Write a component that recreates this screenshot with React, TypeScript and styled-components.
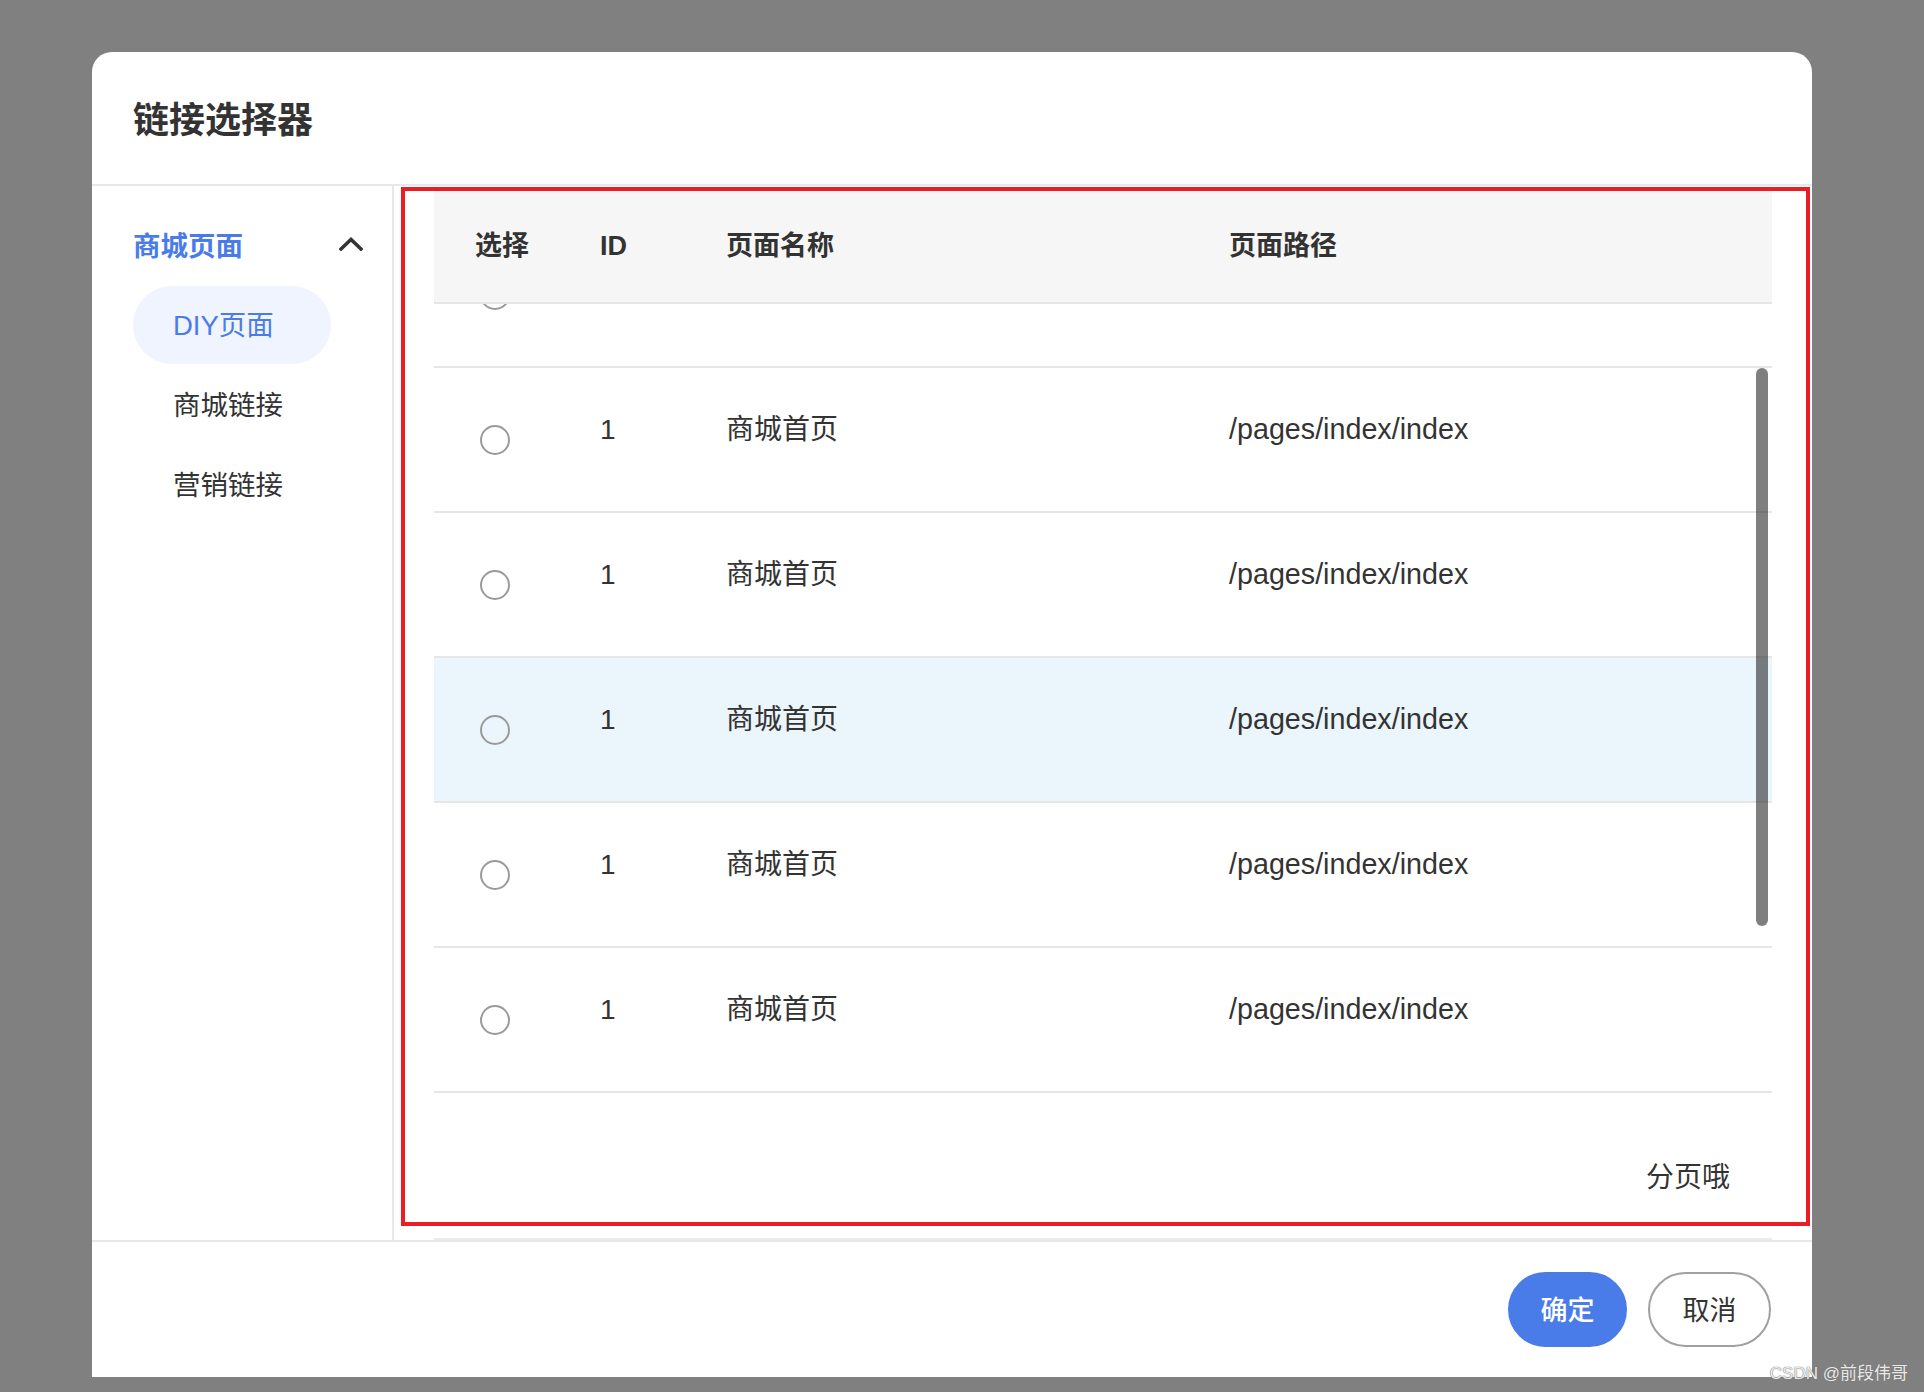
import styled, { createGlobalStyle } from "styled-components";

const GlobalStyle = createGlobalStyle`
  html, body {
    margin: 0;
    padding: 0;
    background: #808080;
  }
  body {
    font-family: "Liberation Sans", "Noto Sans CJK SC", sans-serif;
    color: #333;
  }
  * {
    box-sizing: border-box;
  }
`;

const Page = styled.div`
  position: relative;
  width: 1924px;
  height: 1392px;
  padding: 52px 0 0 92px;
  overflow: hidden;
`;

const Modal = styled.div`
  position: relative;
  width: 1720px;
  height: 1325px;
  background: #fff;
  border-radius: 20px 20px 0 0;
  display: flex;
  flex-direction: column;
`;

const ModalHeader = styled.div`
  height: 134px;
  display: flex;
  align-items: center;
  padding: 0 0 0 41px;
  border-bottom: 2px solid #e8e8e8;
`;

const Title = styled.h2`
  margin: 0;
  font-size: 36px;
  line-height: 1.2;
  font-weight: 700;
  color: #333;
  font-family: "Noto Sans CJK SC", sans-serif;
`;

const ModalBody = styled.div`
  display: flex;
  height: 1054px;
`;

const Sidebar = styled.nav`
  width: 302px;
  flex: none;
  border-right: 2px solid #e8e8e8;
  padding: 28px 29px 0 41px;
  display: flex;
  flex-direction: column;
`;

const GroupHeader = styled.div`
  height: 60px;
  display: flex;
  align-items: center;
  justify-content: space-between;
  margin-bottom: 12px;
`;

const GroupTitle = styled.span`
  font-family: "Noto Sans CJK SC", sans-serif;
  font-size: 27.5px;
  line-height: 1.2;
  font-weight: 700;
  color: #4a7ce9;
`;

const NavItem = styled.div<{ $active?: boolean }>`
  width: 198px;
  height: 78px;
  margin-bottom: 2px;
  border-radius: 39px;
  display: flex;
  align-items: center;
  padding-left: 40px;
  font-size: 27.5px;
  line-height: 1.2;
  color: ${({ $active }) => ($active ? "#4a7ce9" : "#333")};
  background: ${({ $active }) => ($active ? "#f0f4fe" : "transparent")};
`;

const Content = styled.section`
  flex: 1;
  padding: 4px 40px 0;
  display: flex;
  flex-direction: column;
`;

const gridColumns = "125px 126px 503px 1fr";

const HeadRow = styled.div`
  height: 114px;
  display: grid;
  grid-template-columns: ${gridColumns};
  align-items: center;
  padding-left: 41px;
  background: #f6f6f6;
  border-bottom: 2px solid #e6e6e6;
  position: relative;
  z-index: 1;
`;

const HeadCell = styled.div`
  font-size: 27px;
  line-height: 1.2;
  font-weight: 700;
  color: #333;
`;

const Viewport = styled.div`
  position: relative;
  height: 789px;
  overflow: hidden;
`;

// list is scrolled: the first row sits mostly under the sticky header
const RowList = styled.div`
  margin-top: -81px;
`;

const Row = styled.div<{ $hover?: boolean }>`
  height: 145px;
  display: grid;
  grid-template-columns: ${gridColumns};
  align-items: center;
  padding-left: 41px;
  border-bottom: 2px solid #e6e6e6;
  background: ${({ $hover }) => ($hover ? "#ebf5fc" : "#fff")};
`;

const Cell = styled.div<{ $wide?: boolean }>`
  font-size: ${({ $wide }) => ($wide ? "28.7px" : "28px")};
  line-height: 1.2;
  color: #333;
  padding-bottom: 20px;
`;

const Radio = styled.span`
  display: block;
  width: 30px;
  height: 30px;
  margin-left: 5px;
  border: 2px solid #9a9a9a;
  border-radius: 50%;
  background: transparent;
`;

const ScrollThumb = styled.div`
  position: absolute;
  top: 64px;
  right: 4px;
  width: 12px;
  height: 558px;
  border-radius: 6px;
  background: rgba(0, 0, 0, 0.5);
`;

const Pager = styled.div`
  height: 147px;
  padding: 25px 42px 0 0;
  display: flex;
  align-items: center;
  justify-content: flex-end;
  border-bottom: 2px solid #ebebeb;
  font-size: 28px;
  line-height: 1.2;
  color: #333;
`;

const Footer = styled.div`
  flex: 1;
  border-top: 2px solid #e8e8e8;
  display: flex;
  align-items: center;
  justify-content: flex-end;
  gap: 21px;
  padding-right: 41px;
`;

const Button = styled.button<{ $primary?: boolean }>`
  height: 75px;
  width: ${({ $primary }) => ($primary ? "119px" : "123px")};
  border-radius: 38px;
  font-family: "Noto Sans CJK SC", sans-serif;
  font-size: 27px;
  font-weight: ${({ $primary }) => ($primary ? 500 : 400)};
  color: ${({ $primary }) => ($primary ? "#fff" : "#333")};
  background: ${({ $primary }) => ($primary ? "#4a7ce9" : "#fff")};
  border: 2px solid ${({ $primary }) => ($primary ? "#4a7ce9" : "#a0a0a0")};
  padding: 0 0 2px;
  cursor: pointer;
`;

const Annotation = styled.div`
  position: absolute;
  left: 309px;
  top: 135px;
  width: 1409px;
  height: 1039px;
  border: 4px solid #ec1c24;
  pointer-events: none;
  z-index: 2;
`;

const Watermark = styled.div`
  position: absolute;
  right: 16px;
  bottom: 8px;
  font-size: 17px;
  line-height: 1.2;
  color: rgba(255, 255, 255, 0.85);
  text-shadow: 0 0 1px #777, 0 0 1px #777;
`;

const ChevronUp = () => (
  <svg width="24" height="14" viewBox="0 0 24 14" fill="none">
    <polyline
      points="2,12 12,2.5 22,12"
      stroke="#333"
      strokeWidth="3.5"
      strokeLinecap="square"
    />
  </svg>
);

const rows = [0, 1, 2, 3, 4, 5];

export default function App() {
  return (
    <>
      <GlobalStyle />
      <Page>
        <Modal>
          <ModalHeader>
            <Title>链接选择器</Title>
          </ModalHeader>
          <ModalBody>
            <Sidebar>
              <GroupHeader>
                <GroupTitle>商城页面</GroupTitle>
                <ChevronUp />
              </GroupHeader>
              <NavItem $active>DIY页面</NavItem>
              <NavItem>商城链接</NavItem>
              <NavItem>营销链接</NavItem>
            </Sidebar>
            <Content>
              <HeadRow>
                <HeadCell>选择</HeadCell>
                <HeadCell>ID</HeadCell>
                <HeadCell>页面名称</HeadCell>
                <HeadCell>页面路径</HeadCell>
              </HeadRow>
              <Viewport>
                <RowList>
                  {rows.map((i) =>
                    i === 0 ? (
                      // scrolled past: only the bottom of its radio peeks out
                      <Row key={i}>
                        <Radio />
                      </Row>
                    ) : (
                      <Row key={i} $hover={i === 3}>
                        <Radio />
                        <Cell>1</Cell>
                        <Cell>商城首页</Cell>
                        <Cell $wide>/pages/index/index</Cell>
                      </Row>
                    )
                  )}
                </RowList>
                <ScrollThumb />
              </Viewport>
              <Pager>分页哦</Pager>
            </Content>
          </ModalBody>
          <Footer>
            <Button $primary>确定</Button>
            <Button>取消</Button>
          </Footer>
          <Annotation />
        </Modal>
        <Watermark>CSDN @前段伟哥</Watermark>
      </Page>
    </>
  );
}
